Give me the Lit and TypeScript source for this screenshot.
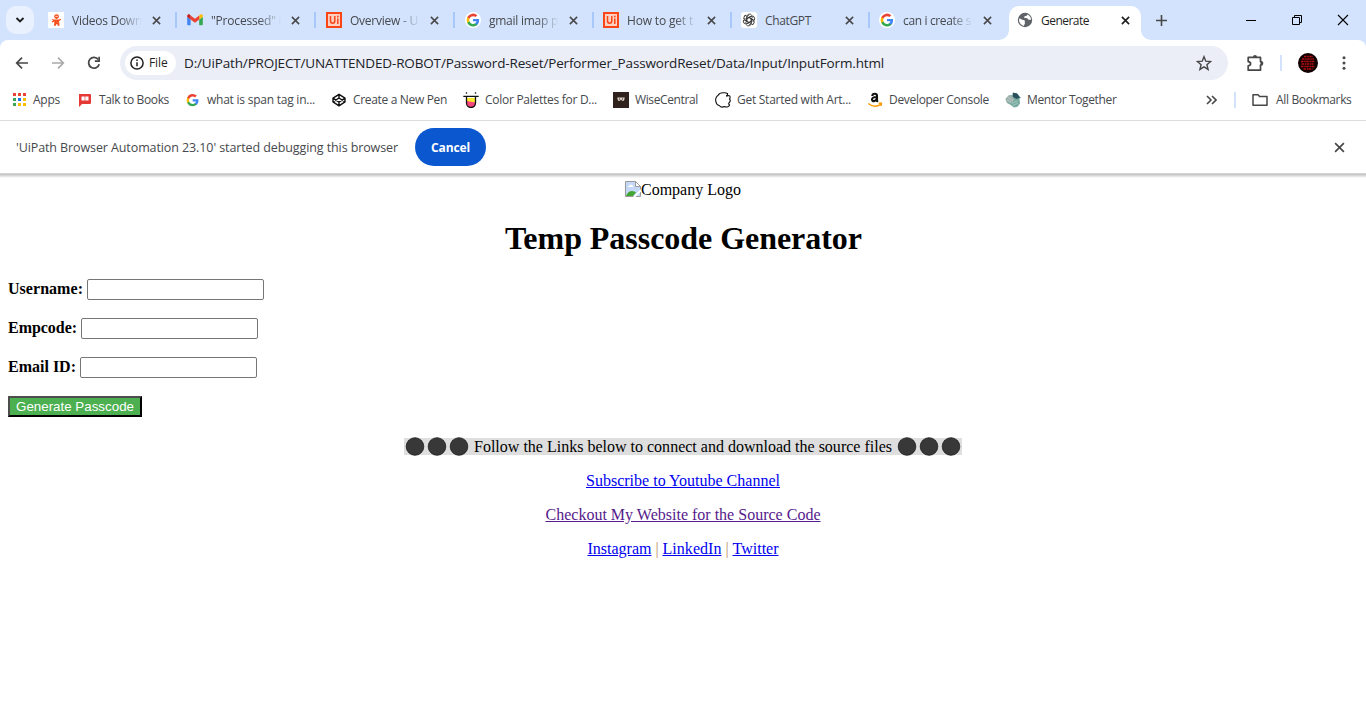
import { LitElement, html, svg, css, nothing } from "lit";
import { customElement, property } from "lit/decorators.js";

/** Text whose tracking is computed so that it fills a given width. */
@customElement("fit-text")
class FitText extends LitElement {
  @property({ type: Number }) w = 0;
  @property() text = "";
  static styles = css`
    :host { display: inline-block; white-space: pre; flex: none; text-decoration: inherit; }
    .t { display: inline-block; white-space: pre; text-decoration: inherit; }
  `;
  firstUpdated() {
    const span = this.renderRoot.querySelector(".t") as HTMLElement;
    const natural = span.getBoundingClientRect().width;
    const gap = (this.w - natural) / this.text.length;
    span.style.letterSpacing = gap + "px";
  }
  render() {
    return html`<span class="t">${this.text}</span>`;
  }
}

const g = svg`
  <path fill="#4285F4" d="M15.6 8.2c0-.6 0-1-.1-1.5H8v3h4.300c-.2 1-.8 1.800-1.600 2.400v2h2.600c1.500-1.400 2.300-3.400 2.300-5.900z"/>
  <path fill="#34A853" d="M8 16c2.200 0 4-.7 5.300-1.900l-2.600-2c-.7.5-1.600.8-2.700.8-2.100 0-3.800-1.400-4.500-3.300H.9v2.100C2.200 14.300 4.900 16 8 16z"/>
  <path fill="#FBBC05" d="M3.500 9.600a4.800 4.800 0 0 1 0-3.100V4.400H.9a8 8 0 0 0 0 7.200z"/>
  <path fill="#EA4335" d="M8 3.200c1.200 0 2.300.4 3.100 1.200l2.300-2.300A8 8 0 0 0 .9 4.400l2.600 2.100C4.200 4.600 5.900 3.200 8 3.200z"/>`;

const icon = {
  videos: svg`<rect width="16" height="16" fill="#fff"/><g fill="#f4511e"><circle cx="8.600" cy="4.600" r="2.400"/><path d="M3.500 7l2.500.6h5l1.700-.8.500.8-1.800 1.500h-.3v1.600l-4.700.3V9.500l-2.300 1-.5-.9 1.500-1z"/><path d="M6.300 10.500h5l.2 3.200H9.700l-.4-1.600h-.7l-.9 1.600H5.900z"/></g><path d="M7.300 4.400h2.800" stroke="#fff" stroke-width=".7"/>`,
  gmail: svg`<path fill="#4285f4" d="M1 13.300h2.600V7.500L.2 5v7.300c0 .6.300 1 .8 1z"/><path fill="#34a853" d="M12.200 13.300H15c.5 0 .8-.4.800-1V5l-3.600 2.500z"/><path fill="#fbbc04" d="M12.200 3.400v4.200L15.800 5V3.800c0-1.500-1.600-2.100-2.600-1.300z"/><path fill="#ea4335" d="M3.600 7.600V3.400L8 6.700l4.200-3.300v4.200L8 10.800z"/><path fill="#c5221f" d="M.2 3.800V5l3.400 2.600V3.400l-.9-.8C1.700 1.800.2 2.400.2 3.800z"/>`,
  uipath: svg`<rect width="16" height="16" fill="#fa4616"/><rect x="2" y="2" width="12" height="12" fill="#ffd0c2"/><path d="M4.500 4v4.800c0 3.300 4.300 3.300 4.300 0V4M11.800 6.500V12" fill="none" stroke="#fa4616" stroke-width="1.500"/><rect x="11" y="3.700" width="1.600" height="1.600" fill="#fa4616"/>`,
  google: svg`<circle cx="8" cy="8" r="8" fill="#fff"/><g transform="translate(1.600 1.600) scale(.8)">${g}</g>`,
  googlePlain: svg`<g transform="translate(1.500 2) scale(.77)">${g}</g>`,
  gpt: svg`<rect width="16" height="16" rx="3" fill="#fff"/><g fill="none" stroke="#333" stroke-width=".9">${[0, 60, 120, 180, 240, 300].map(
    (a) => svg`<path transform="rotate(${a} 8 8)" d="M5.800 9.300V4.700a2.700 2.700 0 0 1 5-1.300M5.800 6.700l4-2.300 2 1.100"/>`)}</g>`,
  globe: svg`<circle cx="8" cy="8" r="7.200" fill="#5f6368"/><path d="M2.200 6.500c2 .2 2.500 1.500 4 1.600 1.500 0 2 .8 1.600 1.900-.3.900.6 1.300-.3 2.300l-.6 1.800A6.300 6.300 0 0 1 2.200 6.500zM10.500 2.400c-.5 1.700-2.500 1.300-3.300 2.300-.6 1 .8 1.500 2 1.300 1.500-.1 1.300 1.500 2.500 1.700.9.100 1.700-.3 2.400.3a6.200 6.200 0 0 0-3.600-5.600z" fill="#fff"/>`,
  apps: svg`${["#ea4335", "#ea4335", "#ea4335", "#34a853", "#1a73e8", "#fbbc04", "#34a853", "#fbbc04", "#fbbc04"].map(
    (c, i) => svg`<rect x=${2 + (i % 3) * 5} y=${1 + Math.floor(i / 3) * 5} width="3" height="3" fill=${c}/>`)}`,
  talk: svg`<path d="M2 2h11q1 0 1 1v8q0 1-1 1H5l-3 3z" fill="#e53935"/><path d="M4.500 4.500h3.200v4H4.500zM8.300 4.500h3.200v4H8.300z" fill="#fff"/>`,
  pen: svg`<path d="M8 2.300l6 3.900v3.700l-6 3.900-6-3.900V6.200zM8 2.300v3.900M8 9.900v3.900M2 6.200l6 3.900 6-3.900M2 9.900l6-3.900 6 3.900" fill="none" stroke="#111" stroke-width="1.400" stroke-linejoin="round"/>`,
  color: svg`<path d="M3.500 4.500h9V11a4.500 4.500 0 0 1-9 0z" fill="#ffe92e"/><path d="M3.500 4h9v2h-9z" fill="#fff"/><path d="M3.500 9l9 1.500V11a4.500 4.500 0 0 1-9 0z" fill="#f8477e"/><path d="M.3 4.300h15.400M3.500 4.300V11a4.500 4.500 0 0 0 9 0V4.300" fill="none" stroke="#111" stroke-width="1.300"/><circle cx="3.500" cy="1" r=".8"/><circle cx="12.500" cy="1" r=".8"/>`,
  wise: svg`<rect width="16" height="16" fill="#30221c"/><path d="M4.200 5.500h7.600l-.8 3.300H9L8 7.500 7 8.800H5z" fill="#ddd2c8"/><path d="M6 7h1M9 7h1" stroke="#30221c"/>`,
  art: svg`<path d="M9 .8C6 .5 4 1.500 3.200 3.200 1 4.500.2 7.500.9 9.500c.3 2.500 1.600 3.700 3.300 4 1.300 1.700 3.500 1.800 5 1.100 2.600 1.200 5.300-.2 5.400-1.700-1-.7-1.300-1.300-.4-2.300 1.300-1.200 1.300-2.500.3-3.700 1-1.500.8-3-.6-3.400l-2.700.7c1-.7 1.700-1.500 1.300-2.700C11.500 1 10.200.6 9 .8z" fill="#fff" stroke="#111" stroke-width="1.100"/>`,
  amazon: svg`<path d="M1.300 11.500c3.800 3.200 8.500 3.500 12.700.8M11.800 11.300l2.600-.1-.4 2.600" fill="none" stroke="#ff9900" stroke-width="1.500"/><path d="M5.300 4C5.500 1 10 1 10 4v5l1 .8M9.800 5C6.500 5 5 5.700 5 7.500c0 2.300 4 2.200 4.700-.8" fill="none" stroke="#111" stroke-width="2.100"/>`,
  mentor: svg`<path d="M.5 7L4 3.500 7 3l1-2.500 4.500 1L15 5l1 .5-1.500 1.500.5 4.500-2.500 3.300-3.500.7L5 12.500 2 11z" fill="#78aaa0"/><path d="M.5 7L4 3l4 2 1.500 3-3.500 3-4-.5z" fill="#a0b0ac"/><path d="M8 .8l4 .8L15 5.500 11.500 7 8 5z" fill="#29505a"/><path d="M6.500 11.500l6-2.500M8 13.500l5-2.500M3 5.500l5 3M2 8l4 2" stroke="#cde4df" stroke-width=".5"/>`,
};

const ic = (body: unknown, cls = "i16") => html`<svg class=${cls} viewBox="0 0 16 16">${body}</svg>`;

const tabs = [
  { w: 139, icon: icon.videos, t: "Videos Down", tw: 70, fade: true },
  { w: 139, icon: icon.gmail, t: '"Processed" (', tw: 71, fade: true },
  { w: 139, icon: icon.uipath, t: "Overview - U", tw: 68, fade: true },
  { w: 138, icon: icon.google, t: "gmail imap p", tw: 69, fade: true },
  { w: 138, icon: icon.uipath, t: "How to get t", tw: 66, fade: true },
  { w: 138, icon: icon.gpt, t: "ChatGPT", tw: 46, fade: false },
  { w: 138, icon: icon.google, t: "can i create s", tw: 68, fade: true },
];

const marks = [
  { w: 66, icon: icon.apps, t: "Apps", tw: 27 },
  { w: 108, icon: icon.talk, t: "Talk to Books", tw: 70 },
  { w: 146, icon: icon.googlePlain, t: "what is span tag in...", tw: 108 },
  { w: 132, icon: icon.pen, t: "Create a New Pen", tw: 94 },
  { w: 150, icon: icon.color, t: "Color Palettes for D...", tw: 112 },
  { w: 102, icon: icon.wise, t: "WiseCentral", tw: 63 },
  { w: 152, icon: icon.art, t: "Get Started with Art...", tw: 114 },
  { w: 138, icon: icon.amazon, t: "Developer Console", tw: 100 },
  { w: 120, icon: icon.mentor, t: "Mentor Together", tw: 89.5 },
];

@customElement("app-root")
class AppRoot extends LitElement {
  static styles = css`
    * { box-sizing: border-box; }
    :host { display: block; width: 1366px; height: 728px; overflow: hidden; background: #fff; font: 12px/16px "Open Sans", sans-serif; color: #46494d; }
    svg { display: block; flex: none; }
    .i16 { width: 16px; height: 16px; }
    .strip { height: 40px; display: flex; background: #d3e3fd; padding-left: 6px; }
    .search { width: 28px; height: 28px; margin-top: 6px; border-radius: 10px; background: #e9f1fe; display: grid; place-items: center; }
    .tabs { display: flex; margin-left: 14px; }
    .tab { height: 40px; display: flex; align-items: center; flex: none; }
    .name { width: 70px; height: 18px; margin-left: 8px; overflow: hidden; display: flex; align-items: center; flex: none; padding-top: 1px; }
    .fade { -webkit-mask-image: linear-gradient(90deg, #000 68%, transparent); mask-image: linear-gradient(90deg, #000 68%, transparent); }
    .close { width: 9px; height: 9px; margin-left: 10px; }
    .sep { width: 2px; height: 16px; background: #a8c7fa; margin-left: 14px; }
    .active { display: flex; align-items: flex-end; margin-left: -18px; }
    .flare { width: 10px; height: 10px; }
    .card { width: 132px; height: 34px; padding-left: 8px; padding-bottom: 6px; background: #fff; border-radius: 10px 10px 0 0; display: flex; align-items: center; color: #1f1f1f; }
    .plus { width: 11px; height: 11px; margin: 15px 0 0 5px; }
    .win { margin-left: auto; display: flex; padding: 14px 17px 0 0; gap: 34px; }
    .win svg { width: 12px; height: 12px; }
    .under { background: #d3e3fd; }
    .bar { height: 46px; background: #fff; border-radius: 8px 8px 0 0; display: flex; align-items: center; padding-left: 14px; }
    .nav { display: flex; gap: 20px; width: 106px; }
    .omni { width: 1108px; height: 34px; border-radius: 17px; background: #ebeef7; display: flex; align-items: center; padding: 0 16px 0 5px; }
    .chip { width: 51px; height: 24px; border-radius: 12px; background: #fff; display: flex; align-items: center; padding-left: 5px; gap: 5px; color: #1f1f1f; }
    .chip svg { width: 14px; height: 14px; }
    .url { margin-left: 8px; font-size: 13.500px; line-height: 18px; color: #202226; }
    .star { margin-left: auto; }
    .ext { width: 20px; height: 20px; margin-left: 17px; }
    .line { width: 2px; height: 16px; background: #d3e3fd; flex: none; }
    .bar .line { margin-left: 15px; }
    .avatar { width: 20px; height: 20px; margin-left: 16px; }
    .dots { width: 4px; height: 16px; margin-left: 24px; }
    .marks { height: 34px; display: flex; align-items: center; padding: 0 15px 6px 11px; }
    .mark { display: flex; align-items: center; gap: 6px; flex: none; }
    .more { width: 11px; height: 10px; margin-left: 81px; }
    .marks .line { margin-left: 17px; }
    .folder { margin: 0 8px 0 16px; }
    .info { height: 54px; border-top: 1px solid #dcdddf; display: flex; align-items: center; padding: 0 21px 1px 16px; font-size: 12.500px; color: #46494d; }
    .info fit-text { padding-top: 2px; }
    .cancel { width: 71px; height: 38px; border-radius: 19px; background: #0b57d0; color: #fff; font-weight: 700; font-size: 12px; display: grid; place-items: center; margin-left: 17px; }
    .info .x { width: 11px; height: 11px; margin-left: auto; }
    .shadow { height: 5px; margin-top: -1px; background: linear-gradient(#d8d8d8, #c8c8c8 30%, #dedede 60%, #fff); }
    .page { font: 16px/18px "Liberation Serif", serif; color: #000; padding-top: 1px; }
    .row { display: flex; align-items: center; justify-content: center; }
    .logo { height: 27px; padding-bottom: 7px; }
    .logo fit-text { padding-top: 2px; }
    .h1 { margin: 0; height: 64px; font-size: 32px; line-height: 36px; font-weight: 700; padding-left: 1px; }
    .field { height: 39px; display: flex; align-items: center; padding-left: 8px; font-weight: 700; gap: 4px; }
    .field > fit-text { padding-bottom: 1px; }
    .input { width: 177px; height: 21px; border: 1px solid #767676; border-radius: 2px; background: #fff; padding: 1px 2px; outline: none; }
    .gen { width: 134px; height: 21px; border: 2px solid; border-color: #4d4d4d #000 #000 #4d4d4d; background: #4caf50; color: #fff; font-family: "Liberation Sans", Arial, sans-serif; font-size: 13.333px; font-weight: 400; line-height: 15px; padding: 0 0 1px; display: flex; justify-content: center; align-items: center; }
    .follow { height: 38px; padding-top: 3px; }
    .band { width: 558px; height: 17px; background: #dedede; display: flex; align-items: center; gap: 5px; padding-left: 1px; }
    .band fit-text { padding-top: 1px; }
    .balls { display: flex; width: 64px; height: 20px; flex: none; }
    .link { height: 34px; }
    a { color: #0000ee; text-decoration: underline; display: block; }
    .visited { color: #551a8b; }
    .pipe { color: #b8956a; }
  `;

  cross(cls: string, color = "#474747", sw = 1.700) {
    return html`<svg class=${cls} viewBox="0 0 10 10"><path d="M1 1l8 8M9 1L1 9" stroke=${color} stroke-width=${sw}/></svg>`;
  }

  balls() {
    return html`<svg class="balls" viewBox="0 0 64 20">${[10, 32, 54].map((x) => svg`<circle cx=${x} cy="9.500" r="8.800" fill="#383838" stroke="#1b1b1b" stroke-width=".8"/>`)}</svg>`;
  }

  field(label: string, w: number) {
    return html`<div class="field"><fit-text .w=${w} .text=${label}></fit-text><input class="input" /></div>`;
  }

  render() {
    return html`
      <div class="strip">
        <div class="search"><svg width="10" height="8" viewBox="0 0 10 8"><path d="M1.500 2L5 5.500 8.500 2" fill="none" stroke="#1f1f1f" stroke-width="1.900"/></svg></div>
        <div class="tabs">
          ${tabs.map((t, i) => html`<div class="tab" style="width:${t.w}px">
            ${ic(t.icon)}
            <div class="name ${t.fade ? "fade" : ""}"><fit-text .w=${t.tw} .text=${t.t}></fit-text></div>
            ${this.cross("close")}
            ${i < 6 ? html`<div class="sep"></div>` : nothing}
          </div>`)}
        </div>
        <div class="active">
          <svg class="flare" viewBox="0 0 10 10"><path d="M10 0v10H0A10 10 0 0 0 10 0z" fill="#fff"/></svg>
          <div class="card">
            ${ic(icon.globe)}
            <div class="name"><fit-text .w=${48} .text=${"Generate"}></fit-text></div>
            ${this.cross("close", "#1f1f1f", 1.800)}
          </div>
          <svg class="flare" viewBox="0 0 10 10"><path d="M0 0v10h10A10 10 0 0 1 0 0z" fill="#fff"/></svg>
        </div>
        <svg class="plus" viewBox="0 0 11 11"><path d="M5.500 0v11M0 5.500h11" stroke="#474747" stroke-width="1.600"/></svg>
        <div class="win">
          <svg viewBox="0 0 12 12"><path d="M1 6.500h10" stroke="#000"/></svg>
          <svg viewBox="0 0 12 12"><path d="M1.500 3.500h7v7h-7zM3.500 3.500v-2h7v7h-2" fill="none" stroke="#000"/></svg>
          <svg viewBox="0 0 12 12"><path d="M1 1l10 10M11 1L1 11" stroke="#000" stroke-width="1.100"/></svg>
        </div>
      </div>
      <div class="under"><div class="bar">
        <div class="nav">
          ${ic(svg`<path d="M14 8H3M8 2.700L2.700 8 8 13.300" fill="none" stroke="#474747" stroke-width="1.700"/>`)}
          ${ic(svg`<path d="M2 8h11M8 2.700L13.300 8 8 13.300" fill="none" stroke="#ababab" stroke-width="1.700"/>`)}
          ${ic(svg`<path d="M13.200 9.200A5.400 5.400 0 1 1 12.300 4.500" fill="none" stroke="#474747" stroke-width="1.800"/><path d="M14 1.800V7H8.800V5.300h3.500V1.800z" fill="#474747"/>`)}
        </div>
        <div class="omni">
          <div class="chip">
            <svg viewBox="0 0 14 14"><circle cx="7" cy="7" r="6.100" fill="none" stroke="#1f1f1f" stroke-width="1.500"/><path d="M7 6.200v4M7 3.500v1.500" stroke="#1f1f1f" stroke-width="1.500"/></svg>
            <fit-text .w=${18.500} .text=${"File"}></fit-text>
          </div>
          <div class="url"><fit-text .w=${700} .text=${"D:/UiPath/PROJECT/UNATTENDED-ROBOT/Password-Reset/Performer_PasswordReset/Data/Input/InputForm.html"}></fit-text></div>
          ${ic(svg`<path d="M8 1.700l1.800 4.500 4.800.4-3.700 3.100 1.200 4.700L8 11.800l-4.100 2.600 1.200-4.700L1.400 6.600l4.800-.4z" fill="none" stroke="#474747" stroke-width="1.400"/>`, "i16 star")}
        </div>
        <svg class="ext" viewBox="0 0 20 20"><path d="M3.200 4.400h12.300v4.200c2.600 0 2.600 3.400 0 3.400v5.200H3.200v-4.400c3.200-.5 3.200-3.600 0-4.100z" fill="none" stroke="#474747" stroke-width="1.700" stroke-linejoin="round"/><path d="M8 4a2 2 0 0 1 4 0zM15.500 8a2.300 2.300 0 0 1 0 4.500z" fill="#474747"/></svg>
        <div class="line"></div>
        <svg class="avatar" viewBox="0 0 20 20"><circle cx="10" cy="10" r="10" fill="#120000"/><path d="M6 3.500h9M4 6h12M3 8.500h14M3.500 11h12M3 13.500h14M5.500 16h9" stroke="#b30d12" stroke-width="1.500" stroke-dasharray="2.500 .7 1.500 .5"/></svg>
        <svg class="dots" viewBox="0 0 4 16"><g fill="#474747"><circle cx="2" cy="2.700" r="1.500"/><circle cx="2" cy="8" r="1.500"/><circle cx="2" cy="13.300" r="1.500"/></g></svg>
      </div></div>
      <div class="marks">
        ${marks.map((m) => html`<div class="mark" style="width:${m.w}px">${ic(m.icon)}<fit-text .w=${m.tw} .text=${m.t}></fit-text></div>`)}
        <svg class="more" viewBox="0 0 11 10"><path d="M1 1l4 4-4 4M6 1l4 4-4 4" fill="none" stroke="#474747" stroke-width="1.600"/></svg>
        <div class="line"></div>
        ${ic(svg`<path d="M1 2.700h5l1.600 1.800H15v8.800H1z" fill="none" stroke="#474747" stroke-width="1.500" stroke-linejoin="round"/>`, "i16 folder")}
        <fit-text .w=${75.5} .text=${"All Bookmarks"}></fit-text>
      </div>
      <div class="info">
        <fit-text .w=${382} .text=${"'UiPath Browser Automation 23.10' started debugging this browser"}></fit-text>
        <div class="cancel"><fit-text .w=${39} .text=${"Cancel"}></fit-text></div>
        ${this.cross("x", "#474747", 1.500)}
      </div>
      <div class="shadow"></div>
      <div class="page">
        <div class="row logo">
          ${ic(svg`<path d="M.5.500h10l5 5v10H.5z" fill="#c5d9f7" stroke="#9a9a9a"/><path d="M10.500.500v5h5z" fill="#fff" stroke="#9a9a9a"/><path d="M3 6q0-1.600 1.600-1.600Q5.500 2.500 7 4.200q1.500.2 1.500 1.800z" fill="#fff"/><path d="M1 15q2-5 6-5 3 0 4 1.500L8 15z" fill="#43a532"/><path d="M8 16L16 8v2.500L10.500 16z" fill="#fff"/>`)}
          <fit-text .w=${100} .text=${"Company Logo"}></fit-text>
        </div>
        <h1 class="row h1"><fit-text .w=${357} .text=${"Temp Passcode Generator"}></fit-text></h1>
        ${this.field("Username:", 75)} ${this.field("Empcode:", 69)} ${this.field("Email ID:", 68)}
        <div class="field"><button class="gen"><fit-text .w=${118} .text=${"Generate Passcode"}></fit-text></button></div>
        <div class="row follow"><div class="band">${this.balls()}<fit-text .w=${418} .text=${"Follow the Links below to connect and download the source files"}></fit-text>${this.balls()}</div></div>
        <div class="row link"><a><fit-text .w=${194} .text=${"Subscribe to Youtube Channel"}></fit-text></a></div>
        <div class="row link"><a class="visited"><fit-text .w=${275} .text=${"Checkout My Website for the Source Code"}></fit-text></a></div>
        <div class="row link"><a><fit-text .w=${64} .text=${"Instagram"}></fit-text></a><fit-text class="pipe" .w=${11} .text=${" | "}></fit-text><a><fit-text .w=${59} .text=${"LinkedIn"}></fit-text></a><fit-text class="pipe" .w=${11} .text=${" | "}></fit-text><a><fit-text .w=${46} .text=${"Twitter"}></fit-text></a></div>
      </div>
    `;
  }
}
